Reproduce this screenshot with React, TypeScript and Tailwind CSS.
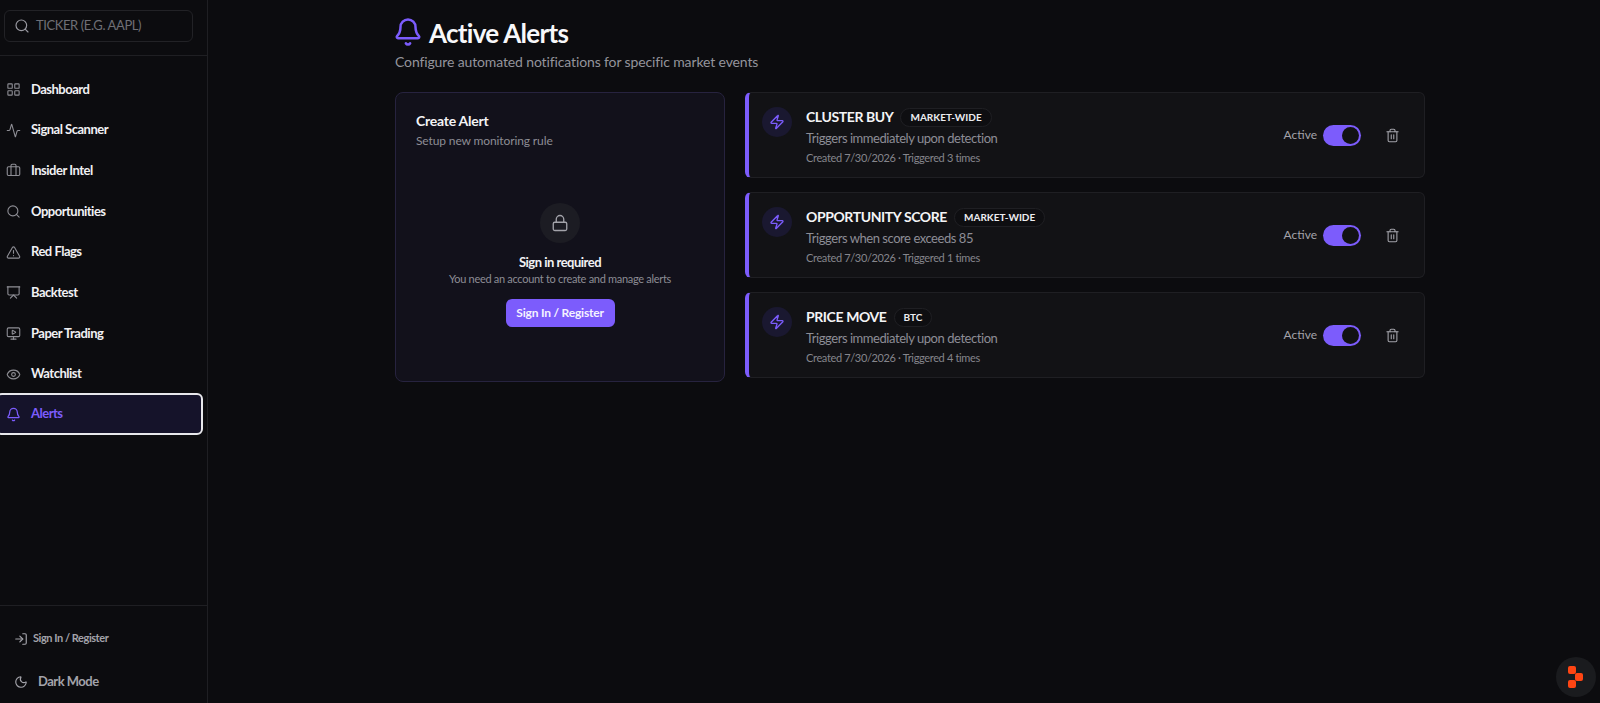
import React from 'react';
import {
  Activity,
  Bell,
  Briefcase,
  Eye,
  LayoutGrid,
  Lock,
  LogIn,
  MonitorPlay,
  Moon,
  Presentation,
  Search,
  Trash2,
  TriangleAlert,
  Zap,
} from 'lucide-react';

const navItems = [
  { label: 'Dashboard', icon: LayoutGrid },
  { label: 'Signal Scanner', icon: Activity },
  { label: 'Insider Intel', icon: Briefcase },
  { label: 'Opportunities', icon: Search },
  { label: 'Red Flags', icon: TriangleAlert },
  { label: 'Backtest', icon: Presentation },
  { label: 'Paper Trading', icon: MonitorPlay },
  { label: 'Watchlist', icon: Eye },
];

const alerts = [
  {
    title: 'CLUSTER BUY',
    scope: 'MARKET-WIDE',
    rule: 'Triggers immediately upon detection',
    meta: 'Created 7/30/2026 · Triggered 3 times',
  },
  {
    title: 'OPPORTUNITY SCORE',
    scope: 'MARKET-WIDE',
    rule: 'Triggers when score exceeds 85',
    meta: 'Created 7/30/2026 · Triggered 1 times',
  },
  {
    title: 'PRICE MOVE',
    scope: 'BTC',
    rule: 'Triggers immediately upon detection',
    meta: 'Created 7/30/2026 · Triggered 4 times',
  },
];

const Sidebar: React.FC = () => {
  return (
    <aside className="flex h-full w-[208px] shrink-0 flex-col border-r border-[#1f1f23]">
      <div className="h-[56px] shrink-0 border-b border-[#1f1f23] pl-[4px] pr-[14px] pt-[10px]">
        <div className="flex h-[32px] items-center gap-[6px] rounded-md border border-[#222226] pl-[9px]">
          <Search size={16} strokeWidth={1.75} className="text-[#9a9aa2]" />
          <span className="text-[13px] tracking-[-0.4px] text-[#6f6f76]">TICKER (E.G. AAPL)</span>
        </div>
      </div>

      <nav className="flex flex-1 flex-col pt-[13px]">
        {navItems.map(({ label, icon: Icon }) => (
          <div key={label} className="flex h-[40.7px] items-center gap-[10px] pl-[6px]">
            <Icon size={15} strokeWidth={1.75} className="text-[#8e8e95]" />
            <span className="text-[13px] font-bold tracking-[-0.5px] text-[#f1f1f4]">{label}</span>
          </div>
        ))}
        <div className="ml-[-4px] mr-[4px] mt-[-1.5px] flex h-[42px] items-center gap-[10px] rounded-md border-2 border-[#e8e8ec] bg-[#15132a] pl-[8px]">
          <Bell size={15} strokeWidth={2} className="text-[#7c5cfc]" />
          <span className="text-[13px] font-bold tracking-[-0.5px] text-[#7c5cfc]">Alerts</span>
        </div>
      </nav>

      <div className="h-[98px] shrink-0 border-t border-[#1f1f23]">
        <div className="flex h-[63px] items-center gap-[5px] pl-[14px] pt-[2px]">
          <LogIn size={14} strokeWidth={2} className="text-[#a3a3aa]" />
          <span className="text-[11px] font-bold tracking-[-0.45px] text-[#a3a3aa]">Sign In / Register</span>
        </div>
        <div className="flex items-center gap-[10px] pl-[14px] pt-[3px]">
          <Moon size={14} strokeWidth={2} className="text-[#a3a3aa]" />
          <span className="text-[13px] font-bold tracking-[-0.5px] text-[#a3a3aa]">Dark Mode</span>
        </div>
      </div>
    </aside>
  );
};

const CreateAlert: React.FC = () => {
  return (
    <section className="h-[290px] w-[330px] shrink-0 rounded-lg border border-[#27233f] bg-[#12111b] px-[20px] pt-[18px]">
      <h2 className="text-[14px] font-bold leading-[20px] tracking-[-0.25px] text-[#f4f4f6]">Create Alert</h2>
      <p className="text-[12px] leading-[20px] tracking-[-0.12px] text-[#8d8d95]">Setup new monitoring rule</p>
      <div className="mt-[52px] flex flex-col items-center">
        <div className="flex h-[40px] w-[40px] items-center justify-center rounded-full bg-[#1c1c23]">
          <Lock size={18} strokeWidth={1.75} className="text-[#a3a3aa]" />
        </div>
        <p className="mt-[10px] text-[13px] font-bold leading-[18px] tracking-[-0.5px] text-[#f1f1f4]">
          Sign in required
        </p>
        <p className="mt-[-1px] text-[11px] leading-[18px] tracking-[-0.3px] text-[#8d8d95]">
          You need an account to create and manage alerts
        </p>
        <button className="mt-[11px] h-[28px] w-[109px] rounded-md bg-[#7c5cfc] text-[12px] font-bold tracking-[-0.2px] text-[#f4f2ff]">
          Sign In / Register
        </button>
      </div>
    </section>
  );
};

const AlertCard: React.FC<(typeof alerts)[number]> = ({ title, scope, rule, meta }) => {
  return (
    <div className="flex h-[86px] items-center rounded-md border border-l-4 border-[#1f1f23] border-l-[#7c5cfc] bg-[#121215] pl-[13px] pr-[24px]">
      <div className="mt-[14px] flex h-[30px] w-[30px] shrink-0 items-center justify-center self-start rounded-full bg-[#1a1830]">
        <Zap size={16} strokeWidth={2} className="text-[#7c5cfc]" />
      </div>
      <div className="ml-[14px] mt-[14px] flex-1 self-start">
        <div className="flex items-center gap-[7px]">
          <span className="text-[14px] font-bold leading-[20px] tracking-[-0.4px] text-[#f4f4f6]">{title}</span>
          <span className="rounded-full border border-[#1f1f23] bg-[#0e0e11] px-[9px] text-[10px] font-bold leading-[17px] text-[#ececf0]">
            {scope}
          </span>
        </div>
        <p className="mt-[2px] text-[13px] leading-[18px] tracking-[-0.45px] text-[#8d8d95]">{rule}</p>
        <p className="mt-[2px] text-[11px] leading-[18px] tracking-[-0.35px] text-[#85858c]">{meta}</p>
      </div>
      <span className="mr-[6px] text-[12px] text-[#a3a3aa]">Active</span>
      <div className="flex h-[21px] w-[38px] items-center justify-end rounded-full bg-[#7c5cfc] pr-[2px]">
        <div className="h-[17px] w-[17px] rounded-full bg-[#121215]" />
      </div>
      <Trash2 size={15} strokeWidth={1.75} className="ml-[24px] text-[#a3a3aa]" />
    </div>
  );
};

export default function App() {
  return (
    <div className="relative flex h-screen overflow-hidden bg-[#0c0c0f] font-['Lato',sans-serif]">
      <Sidebar />
      <main className="flex-1 pl-[187px] pt-[16px]">
        <div className="w-[1030px]">
          <div className="flex h-[32px] items-center gap-[5px]">
            <Bell size={30} strokeWidth={2} className="ml-[-2px] text-[#7c5cfc]" />
            <h1 className="mt-[2px] pl-[1px] text-[26px] font-bold leading-[32px] tracking-[-0.7px] text-[#f8f8fa]">
              Active Alerts
            </h1>
          </div>
          <p className="mt-[4px] text-[14px] leading-[20px] tracking-[-0.13px] text-[#94949c]">
            Configure automated notifications for specific market events
          </p>
          <div className="mt-[20px] flex gap-[20px]">
            <CreateAlert />
            <div className="flex flex-1 flex-col gap-[14px]">
              {alerts.map((alert) => (
                <AlertCard key={alert.title} {...alert} />
              ))}
            </div>
          </div>
        </div>
      </main>
      <div className="absolute bottom-[6px] right-[4px] flex h-[40px] w-[40px] items-center justify-center rounded-full bg-[#1a1b1e]">
        <svg width="16" height="22" viewBox="0 0 16 22" fill="#ff4513">
          <rect x="0" y="0" width="8" height="8" rx="2" />
          <rect x="7" y="7" width="8" height="8" rx="2" />
          <rect x="0" y="14" width="8" height="8" rx="2" />
        </svg>
      </div>
    </div>
  );
}
